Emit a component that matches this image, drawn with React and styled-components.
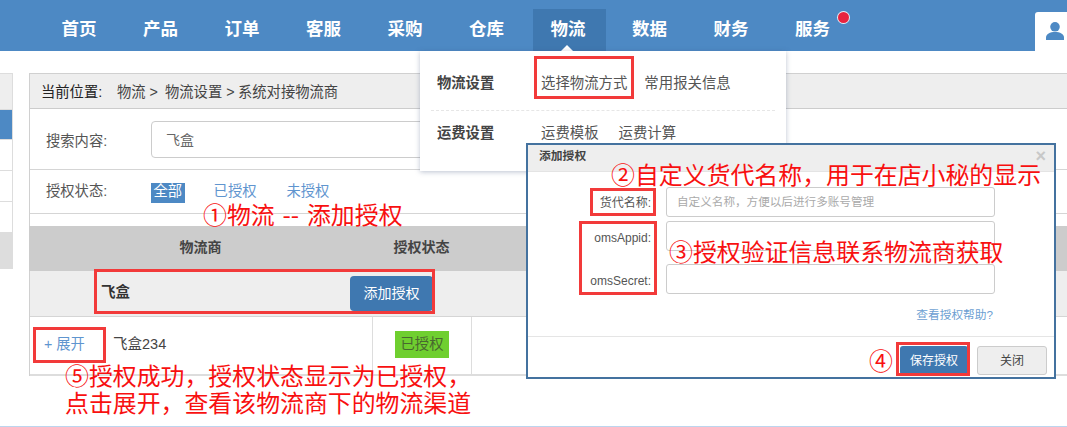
import React from 'react';
import styled, { createGlobalStyle } from 'styled-components';

const GlobalStyle = createGlobalStyle`
html, body {
  margin: 0;
  padding: 0;
  overflow: hidden;
  background: #fff;
}
* {
  box-sizing: border-box;
}
`;

const navItems = ['首页', '产品', '订单', '客服', '采购', '仓库', '物流', '数据', '财务', '服务'];

function App() {
  return (
    <Page>
      <GlobalStyle />
      <Nav>
        {navItems.map((name) => (
          <NavItem key={name} $active={name === '物流'}>
            {name}
            {name === '服务' && <NavDot />}
          </NavItem>
        ))}
        <UserTab>
          <svg width="18" height="18" viewBox="0 0 18 18" fill="#4d89c4">
            <circle cx="9" cy="4.8" r="4.8" />
            <path d="M0 18v-2.5C0 12 4 10 9 10s9 2 9 5.5V18z" />
          </svg>
        </UserTab>
      </Nav>

      <Body>
        <Sidebar>
          <SideRow $h={36} $bg="#eee" />
          <SideRow $h={30} $bg="#4d89c4" />
          <SideRow $h={31} />
          <SideRow $h={31} />
          <SideRow $h={31} />
          <SideRow $h={37} $bg="#ddd" />
        </Sidebar>
        <Main>
          <Crumbs>
            <CrumbHome>当前位置:</CrumbHome>
            <Crumb $w={48}>物流 &gt;</Crumb>
            <Crumb $w={73}>物流设置 &gt;</Crumb>
            <Crumb>系统对接物流商</Crumb>
          </Crumbs>
          <SearchRow>
            <FieldLabel>搜索内容:</FieldLabel>
            <SearchInput>飞盒</SearchInput>
          </SearchRow>
          <StatusRow>
            <FieldLabel>授权状态:</FieldLabel>
            <StatusOn>全部</StatusOn>
            <StatusLink>已授权</StatusLink>
            <StatusLink>未授权</StatusLink>
          </StatusRow>
          <TableHead>
            <NameCol>物流商</NameCol>
            <StateCol>授权状态</StateCol>
          </TableHead>
          <GroupRow>
            <GroupName>飞盒</GroupName>
            <PrimaryButton>添加授权</PrimaryButton>
          </GroupRow>
          <AccountRow>
            <AccountCell>
              <Expand>+ 展开</Expand>
              <span>飞盒234</span>
            </AccountCell>
            <TagCell>
              <Tag>已授权</Tag>
            </TagCell>
          </AccountRow>
        </Main>
      </Body>

      <Menu>
        <MenuRow $h={59}>
          <MenuTitle>物流设置</MenuTitle>
          <MenuLink $gap={17}>选择物流方式</MenuLink>
          <MenuLink $gap={17}>常用报关信息</MenuLink>
        </MenuRow>
        <MenuRow $h={61} $dashed>
          <MenuTitle>运费设置</MenuTitle>
          <MenuLink $gap={20}>运费模板</MenuLink>
          <MenuLink $gap={20}>运费计算</MenuLink>
        </MenuRow>
      </Menu>

      <Modal>
        <ModalHead>
          <span>添加授权</span>
          <Close>×</Close>
        </ModalHead>
        <ModalForm>
          <FormRow $top={15}>
            <FormLabel>货代名称:</FormLabel>
            <FormInput>{'自定义名称\uFF0C方便以后进行多账号管理'}</FormInput>
          </FormRow>
          <FormRow $top={4}>
            <FormLabel $latin>omsAppid:</FormLabel>
            <FormInput />
          </FormRow>
          <FormRow $top={13}>
            <FormLabel $latin>omsSecret:</FormLabel>
            <FormInput />
          </FormRow>
        </ModalForm>
        <HelpLink>查看授权帮助?</HelpLink>
        <ModalFoot>
          <SaveButton>保存授权</SaveButton>
          <CloseButton>关闭</CloseButton>
        </ModalFoot>
      </Modal>

      <RedBox $x={534} $y={56} $w={100} $h={43} />
      <RedBox $x={94} $y={269} $w={341} $h={45} />
      <RedBox $x={33} $y={327} $w={73} $h={36} />
      <RedBox $x={590} $y={188} $w={66} $h={28} />
      <RedBox $x={579} $y={221} $w={78} $h={74} />
      <RedBox $x={896} $y={342} $w={74} $h={34} />

      <Note $x={203} $y={199}>①物流 -- 添加授权</Note>
      <Note $x={611} $y={159}>{'②自定义货代名称\uFF0C用于在店小秘的显示'}</Note>
      <Note $x={669} $y={236}>③授权验证信息联系物流商获取</Note>
      <Note $x={869} $y={345}>④</Note>
      <Note $x={65} $y={360}>{'⑤授权成功\uFF0C授权状态显示为已授权\uFF0C'}</Note>
      <Note $x={65} $y={387}>{'点击展开\uFF0C查看该物流商下的物流渠道'}</Note>
      <BottomLine />
    </Page>
  );
}

const Page = styled.div`
position: relative;
width: 1067px;
height: 427px;
overflow: hidden;
background: #fff;
color: #555;
font-family: "Liberation Sans", "Noto Sans CJK SC", sans-serif;
font-size: 14px;
`;

const Nav = styled.div`
display: flex;
align-items: flex-end;
height: 51px;
padding-left: 44px;
background: #4d89c4;
`;

const NavItem = styled.div`
position: relative;
width: 70px;
height: 42px;
margin-right: 11.5px;
padding-top: 7px;
text-align: center;
color: #fff;
font-size: 17.5px;
font-weight: 700;
line-height: 26px;
background: ${(p) => (p.$active ? '#3f78b0' : 'transparent')};
box-shadow: ${(p) => (p.$active ? '3px 0 0 #3f78b0' : 'none')};

${(p) => p.$active && `
  &::after {
    content: '';
    position: absolute;
    left: 28px;
    bottom: 0;
    border: 6px solid transparent;
    border-top: 0;
    border-bottom-color: #fff;
  }
`}
`;

const NavDot = styled.span`
position: absolute;
left: 60px;
top: 3px;
width: 11px;
height: 11px;
border-radius: 50%;
background: #e8233f;
box-shadow: 0 0 0 1px #e9eef5;
`;

const UserTab = styled.div`
display: flex;
align-items: flex-start;
width: 32px;
height: 39px;
margin-left: auto;
padding: 10px 0 0 11px;
background: #fff;
border-top-left-radius: 3px;
`;

const Body = styled.div`
display: flex;
padding-top: 22px;
`;

const Sidebar = styled.div`
width: 13px;
height: 196px;
margin-right: 16px;
border-right: 1px solid #ddd;
flex-shrink: 0;
`;

const SideRow = styled.div`
height: ${(p) => p.$h}px;
background: ${(p) => p.$bg || '#fff'};
border-top: 1px solid #ddd;
`;

const Main = styled.div`
width: 1060px;
flex-shrink: 0;
border-top: 1px solid #d0d0d0;
border-left: 1px solid #d0d0d0;
`;

const Crumbs = styled.div`
display: flex;
align-items: center;
height: 35px;
padding: 0 0 2px 11px;
background: #eee;
border-bottom: 1px solid #ccc;
color: #444;
font-size: 14.3px;
`;

const CrumbHome = styled.span`
width: 76px;
color: #222;
`;

const Crumb = styled.span`
width: ${(p) => (p.$w ? `${p.$w}px` : 'auto')};
`;

const SearchRow = styled.div`
display: flex;
align-items: center;
height: 61px;
padding-left: 16px;
border-bottom: 1px solid #d5d5d5;
`;

const FieldLabel = styled.div`
width: 105px;
color: #555;
font-size: 14.3px;
`;

const SearchInput = styled.div`
display: flex;
align-items: center;
width: 400px;
height: 37px;
padding-left: 14px;
border: 1px solid #ccc;
border-radius: 4px;
color: #666;
`;

const StatusRow = styled.div`
display: flex;
align-items: center;
height: 44px;
padding: 0 0 4px 16px;
margin-bottom: 12px;
border-bottom: 1px solid #d5d5d5;
`;

const StatusOn = styled.span`
height: 20px;
margin: 6px 29px 0 0;
padding: 0 2.5px;
background: #4d89c4;
color: #fff;
line-height: 17px;
font-size: 14.3px;
`;

const StatusLink = styled.span`
margin-right: 30px;
color: #5f95cf;
font-size: 14.3px;
`;

const TableHead = styled.div`
display: flex;
align-items: center;
height: 45px;
margin-left: -1px;
padding-bottom: 5px;
background: #ccc;
color: #444;
font-weight: 700;
font-size: 14px;
`;

const NameCol = styled.div`
width: 343px;
text-align: center;
`;

const StateCol = styled.div`
width: 99px;
text-align: center;
`;

const GroupRow = styled.div`
display: flex;
align-items: center;
height: 46px;
padding-left: 71px;
background: #eee;
border-bottom: 1px solid #d5d5d5;
`;

const GroupName = styled.div`
width: 249px;
padding-bottom: 6px;
color: #333;
font-size: 14.5px;
font-weight: 700;
`;

const PrimaryButton = styled.div`
display: flex;
align-items: center;
justify-content: center;
width: 83px;
height: 35px;
padding-bottom: 3px;
border-radius: 4px;
background: #3f78b0;
color: #fff;
font-size: 14px;
`;

const AccountRow = styled.div`
display: flex;
height: 59px;
border-bottom: 2px solid #ddd;
`;

const AccountCell = styled.div`
display: flex;
align-items: center;
width: 342px;
padding: 0 0 7px 14px;
color: #444;
font-size: 14.5px;
`;

const Expand = styled.span`
width: 69px;
color: #5f95cf;
font-size: 14.3px;
`;

const TagCell = styled.div`
display: flex;
align-items: center;
justify-content: center;
width: 100px;
padding-bottom: 2px;
border-left: 1px solid #ddd;
border-right: 1px solid #ddd;
`;

const Tag = styled.span`
display: flex;
align-items: center;
justify-content: center;
width: 54px;
height: 27px;
padding-bottom: 4px;
background: #6fcf2f;
color: #48682f;
font-size: 14.3px;
`;

const Menu = styled.div`
position: absolute;
left: 420px;
top: 51px;
width: 366px;
height: 120px;
padding: 0 11px;
background: #fff;
box-shadow: 0 1px 5px rgba(60, 80, 120, 0.35);
`;

const MenuRow = styled.div`
display: flex;
align-items: ${(p) => (p.$dashed ? 'flex-start' : 'center')};
height: ${(p) => p.$h}px;
padding-top: ${(p) => (p.$dashed ? '10px' : '2px')};
border-top: ${(p) => (p.$dashed ? '1px dashed #e6e6e6' : '0')};
color: #555;
`;

const MenuTitle = styled.div`
width: 104px;
margin-left: 6px;
color: #444;
font-size: 14.3px;
font-weight: 700;
`;

const MenuLink = styled.div`
margin-right: ${(p) => p.$gap}px;
color: #555;
font-size: 14.4px;
`;

const Modal = styled.div`
position: absolute;
left: 526px;
top: 143px;
display: flex;
flex-direction: column;
width: 530px;
height: 236px;
border: 2px solid #44729f;
background: #fff;
`;

const ModalHead = styled.div`
display: flex;
align-items: center;
justify-content: space-between;
height: 27px;
padding: 0 8px 8px 11px;
background: #eee;
border-bottom: 1px solid #e4e4e4;
color: #444;
font-size: 11.8px;
font-weight: 700;
`;

const Close = styled.span`
margin-top: 4px;
color: #c8c8c8;
font-size: 18px;
`;

const ModalForm = styled.div`
display: flex;
flex-direction: column;
`;

const FormRow = styled.div`
display: flex;
gap: 15px;
height: 30px;
margin-top: ${(p) => p.$top}px;
`;

const FormLabel = styled.div`
display: flex;
align-items: center;
justify-content: flex-end;
width: 123px;
padding: ${(p) => (p.$latin ? '3px 0 0' : '0 0 1px')};
color: #555;
font-size: 12px;
`;

const FormInput = styled.div`
display: flex;
align-items: center;
width: 329px;
padding: 0 0 3px 10px;
border: 1px solid #ccc;
border-radius: 3px;
color: #aaa;
font-size: 11.6px;
`;

const HelpLink = styled.div`
margin-top: 11px;
padding-right: 61px;
text-align: right;
color: #6d9fd2;
font-size: 11.7px;
`;

const ModalFoot = styled.div`
display: flex;
justify-content: flex-end;
align-items: flex-end;
gap: 9px;
height: 41px;
margin-top: auto;
padding: 0 7px 2px 0;
border-top: 1px solid #e5e5e5;
`;

const SaveButton = styled.div`
display: flex;
align-items: center;
justify-content: center;
width: 68px;
height: 29px;
padding-bottom: 3px;
border-radius: 3px;
background: #3f78b0;
color: #fff;
font-size: 12px;
`;

const CloseButton = styled.div`
display: flex;
align-items: center;
justify-content: center;
width: 70px;
height: 29px;
padding-bottom: 3px;
border: 1px solid #ccc;
border-radius: 3px;
background: #eee;
color: #444;
font-size: 12px;
`;

const RedBox = styled.div`
position: absolute;
left: ${(p) => p.$x}px;
top: ${(p) => p.$y}px;
width: ${(p) => p.$w}px;
height: ${(p) => p.$h}px;
border: 3px solid #f23a3a;
`;

const Note = styled.div`
position: absolute;
left: ${(p) => p.$x}px;
top: ${(p) => p.$y}px;
color: #f81010;
font-size: 23.9px;
line-height: 30px;
word-spacing: 2.5px;
white-space: nowrap;
font-family: "Noto Sans CJK SC", sans-serif;
`;

const BottomLine = styled.div`
position: absolute;
left: 0;
right: 0;
bottom: 0;
height: 1px;
background: #bcd5ee;
`;

export default App;
